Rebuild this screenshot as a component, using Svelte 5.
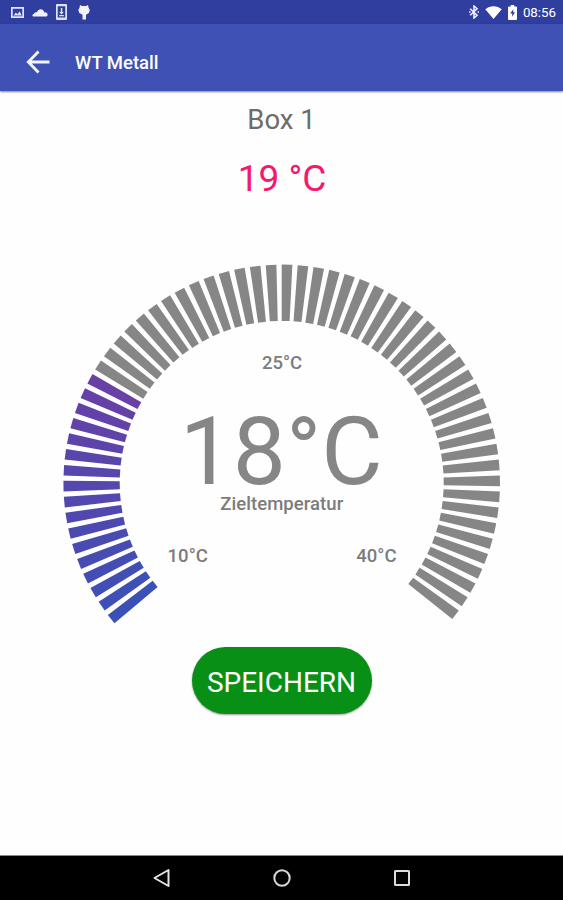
<script>
    const min = 10
    const max = 40
    const target = 18
    const current = 19
    const ticks = 62
    const start_angle = 140
    const step = 130 / 31
    const tick_angle = 2.8
    const outer = 218.3
    const inner = 162
    const cold = [59, 80, 182]
    const warm = [104, 64, 166]

    const active_ticks = Math.ceil(ticks * (target - min) / (max - min))

    const point = (radius, angle) => {
        const rad = angle * Math.PI / 180
        return `${(radius * Math.cos(rad)).toFixed(2)},${(radius * Math.sin(rad)).toFixed(2)}`
    }

    const tick_points = (index) => {
        const from = start_angle + index * step
        const to = from + tick_angle
        return [point(inner, from), point(outer, from), point(outer, to), point(inner, to)].join(' ')
    }

    const tick_color = (index) => {
        if (index >= active_ticks) return '#868686'
        const part = index / (active_ticks - 1)
        return `rgb(${cold.map((c, i) => Math.round(c + (warm[i] - c) * part)).join(',')})`
    }
</script>

<div class="screen">
    <div class="status">
        <div class="icons left">
            <svg width="13" height="13" viewBox="0 0 13 13">
                <path fill="#dfe3fb" fill-rule="evenodd" d="M0 1h13v11H0zM1.7 2.7v7.6h9.6V2.7zM2.5 9.5l2.4-3 1.7 1.8 2-3 2.2 4.2z"/>
            </svg>
            <svg width="16" height="13" viewBox="0 0 16 13">
                <path fill="#eef0ff" d="M1.500 10.500C0 10.500 0 8 1.700 7.900 2.500 6.300 4 6 5 6.200 6.500 2.200 11.500 2.500 12.200 6.400 14.200 6 15.600 7.200 15.600 8.700c0 1.100-.8 1.800-1.900 1.800z"/>
            </svg>
            <svg width="11" height="16" viewBox="0 0 11 16">
                <path fill="#dfe3fb" fill-rule="evenodd" d="M1 0h9a1 1 0 0 1 1 1v14a1 1 0 0 1-1 1H1a1 1 0 0 1-1-1V1a1 1 0 0 1 1-1zM1.700 2.300v11.200h7.600V2.300z"/>
                <path fill="#dfe3fb" d="M4.800 4h1.500v4h1.500L5.500 10.500 3.200 8h1.600zM3.200 11h4.600v1.200H3.200z"/>
            </svg>
            <svg class="cat" width="12" height="15" viewBox="0 0 12 15">
                <path fill="#f0f2ff" d="M2 0 4 1h4l2-1 .6 2.800 1.200 2.200-.9 3L8 9.800v4.700H4.500V9.800L1.300 8 .3 5l1.200-2.200z"/>
            </svg>
        </div>
        <div class="icons right">
            <svg class="bluetooth" width="10" height="14" viewBox="0 0 10 14">
                <path fill="none" stroke="#eef0ff" stroke-width="1.600" d="M1.200 3.700 8 10.300 5 13V1L8 3.700 1.200 10.300"/>
                <path fill="#eef0ff" d="M0 6.200h1.500v1.600H0zM8.500 6.200H10v1.600H8.500z"/>
            </svg>
            <svg class="wifi" width="17" height="13" viewBox="0 0 17 13">
                <path fill="#fff" d="M.3 3.200C5-.7 12-.7 16.700 3.200L8.500 13z"/>
            </svg>
            <svg class="battery" width="9" height="15" viewBox="0 0 9 15">
                <path fill="#fff" fill-rule="evenodd" d="M2.800 0h3.400v1.500H8a1 1 0 0 1 1 1V14a1 1 0 0 1-1 1H1a1 1 0 0 1-1-1V2.500a1 1 0 0 1 1-1h1.800zM5.200 4.300 2.200 8.600h2v3.200l2.800-4.500h-1.800z"/>
            </svg>
            <span class="time">08:56</span>
        </div>
    </div>

    <header>
        <svg width="24" height="24" viewBox="0 0 24 24">
            <path fill="none" stroke="#f4f5ff" stroke-width="2.800" d="M12.500 1.500 2.300 12l10.200 10.500M2.500 12h21"/>
        </svg>
        <h1>WT Metall</h1>
    </header>

    <main>
        <p class="name">Box 1</p>
        <p class="current">{current} °C</p>

        <svg class="gauge" width="563" height="380" viewBox="-281.700 -232.900 563 380">
            {#each Array(ticks) as _, index}
                <polygon points={tick_points(index)} fill={tick_color(index)}/>
            {/each}
            <text class="label" x="0.300" y="-113.700">{(min + max) / 2}°C</text>
            <text class="target" x="-0.500" y="0.600">{target}°C</text>
            <text class="label" x="0" y="27" textLength="123">Zieltemperatur</text>
            <text class="label" x="-94" y="79.300">{min}°C</text>
            <text class="label" x="94.700" y="79.300">{max}°C</text>
        </svg>

        <button>SPEICHERN</button>
    </main>

    <nav>
        <svg width="18" height="20" viewBox="0 0 18 20">
            <path fill="none" stroke="#e4e4e4" stroke-width="2" stroke-linejoin="round" d="M15.500 2v16L1.500 10z"/>
        </svg>
        <svg width="18" height="20" viewBox="0 0 18 20">
            <circle cx="9" cy="10" r="7.700" fill="none" stroke="#d8d8d8" stroke-width="2"/>
        </svg>
        <svg width="18" height="20" viewBox="0 0 18 20">
            <rect x="2" y="3" width="14" height="14" rx="0.500" fill="none" stroke="#dcdcdc" stroke-width="2"/>
        </svg>
    </nav>
</div>

<style>
    :global(body) {
        margin: 0;
        background: #fff;
    }

    .screen {
        display: flex;
        flex-direction: column;
        height: 900px;
        width: 563px;
        overflow: hidden;
        background: #fefefe;
        font-family: Roboto, "Noto Sans", sans-serif;
    }

    .status {
        box-sizing: border-box;
        display: flex;
        justify-content: space-between;
        height: 24px;
        padding: 0 7px 0 11px;
        background: #303f9f;
        color: #fff;
    }

    .icons {
        display: flex;
        align-items: center;
    }

    .left svg {
        margin-right: 8px;
    }

    .left .cat {
        margin-left: 3px;
    }

    .bluetooth {
        margin-right: 6px;
    }

    .wifi {
        margin-right: 6px;
    }

    .battery {
        margin-right: 6px;
    }

    .time {
        font-size: 13.3px;
        font-weight: 400;
        line-height: 24px;
        padding-top: 2px;
    }

    header {
        box-sizing: border-box;
        display: flex;
        align-items: center;
        height: 67px;
        padding: 9px 26px 0;
        background: #3f51b5;
        box-shadow: 0 1px 2px rgba(0, 0, 0, 0.5);
    }

    h1 {
        margin: 0 0 0 25px;
        padding-top: 1px;
        color: #fff;
        font-size: 18.5px;
        font-weight: 500;
        line-height: 24px;
    }

    main {
        display: flex;
        flex: 1;
        flex-direction: column;
        align-items: center;
    }

    p {
        margin: 0;
    }

    .name {
        padding-top: 13px;
        color: #6c6c6c;
        font-size: 27.5px;
        line-height: 32px;
    }

    .current {
        padding: 22px 0 0 1px;
        color: #f5186e;
        font-size: 37px;
        line-height: 42px;
    }

    .gauge {
        display: block;
        margin-top: 50px;
    }

    text {
        fill: #7c7c7c;
        text-anchor: middle;
    }

    .label {
        font-size: 18.500px;
        font-weight: 500;
    }

    .target {
        fill: #868686;
        font-size: 94.500px;
    }

    button {
        width: 180px;
        height: 67px;
        margin-top: 17px;
        padding: 4px 0 0;
        border: 0;
        border-radius: 34px;
        background: #079015;
        box-shadow: 0 1px 2px rgba(0, 0, 0, 0.4);
        color: #fff;
        font-family: inherit;
        font-size: 28px;
        line-height: 32px;
    }

    nav {
        box-sizing: border-box;
        display: flex;
        justify-content: center;
        align-items: center;
        gap: 102px;
        height: 45px;
        border-top: 1px solid #888;
        background: #000;
    }
</style>
